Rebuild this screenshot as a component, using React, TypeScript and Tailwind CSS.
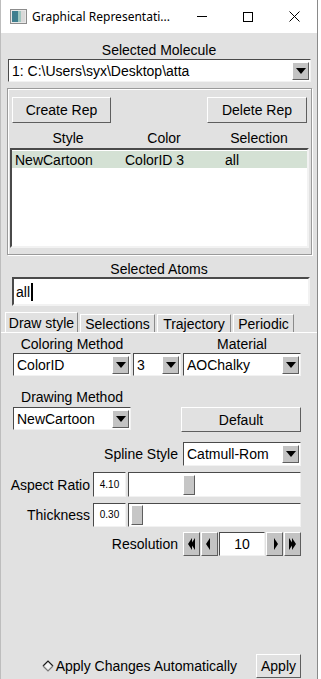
import React from "react";
import { clsx } from "clsx";

const sunken = "border border-t-[#4a4a4a] border-l-[#4a4a4a] border-b-[#f2f2f2] border-r-[#f2f2f2]";
const raised = "border border-t-white border-l-white border-b-[#5e5e5e] border-r-[#5e5e5e]";

const DownArrow = () => (
  <div className={clsx("flex h-[18px] w-[17px] flex-none items-center justify-center bg-[#c3c3c3]", raised)}>
    <svg width="10" height="6" viewBox="0 0 10 6">
      <path d="M0 0h10L5 6z" fill="#000" />
    </svg>
  </div>
);

const Dropdown: React.FC<{ value: string; className?: string }> = ({ value, className }) => (
  <div className={clsx("flex items-center bg-white pl-[3px] pr-[1px]", sunken, className)}>
    <span className="flex-1 truncate">{value}</span>
    <DownArrow />
  </div>
);

const Button: React.FC<{ label: string; className?: string }> = ({ label, className }) => (
  <div className={clsx("flex items-center justify-center bg-[#e1e1e1]", raised, className)}>{label}</div>
);

const Slider: React.FC<{ thumb: number }> = ({ thumb }) => (
  <div className={clsx("flex h-full w-[173px] items-center bg-white", sunken)}>
    <div
      className={clsx("h-[20px] w-[12px] bg-[#c6c6c6]", raised)}
      style={{ marginLeft: thumb }}
    />
  </div>
);

const ArrowBtn: React.FC<{ dir: "l" | "r"; double?: boolean }> = ({ dir, double }) => (
  <div className={clsx("flex h-full w-[17px] items-center justify-center bg-[#c3c3c3]", raised)}>
    <svg width="9" height="14" viewBox="0 0 9 14">
      {dir === "l" ? (
        <>
          <path d="M1 7L5 1v12z" fill="#000" />
          {double && <path d="M4 7L8 1v12z" fill="#000" />}
        </>
      ) : (
        <>
          <path d="M8 7L4 1v12z" fill="#000" />
          {double && <path d="M5 7L1 1v12z" fill="#000" />}
        </>
      )}
    </svg>
  </div>
);

const tabs = [
  { label: "Draw style", w: "w-[73px]", active: true },
  { label: "Selections", w: "w-[75px]" },
  { label: "Trajectory", w: "w-[74px]" },
  { label: "Periodic", w: "w-[61px]" },
];

export default function App() {
  return (
    <div className="flex h-[679px] w-[321px] bg-white text-[14px] leading-[16px] text-black [font-family:'Liberation_Sans',Arial,sans-serif]">
      <div className="flex w-[318px] flex-col border-l border-r border-l-[#bdbdbd] border-r-[#8a8a8a]">
        {/* title bar */}
        <div className="flex h-[33px] flex-none items-center bg-white">
          <svg className="ml-[9px]" width="17" height="15" viewBox="0 0 17 15">
            <rect x="0.5" y="0.5" width="16" height="14" fill="#e8e8e8" stroke="#8c8c8c" />
            <rect x="2" y="2" width="6" height="11" fill="#3f7f8f" />
            <rect x="8" y="2" width="3" height="11" fill="#9fc7c0" />
            <rect x="11" y="2" width="4" height="11" fill="#d9d9d9" />
          </svg>
          <span className="ml-[5px] text-[12px] [font-family:'Noto_Sans',sans-serif]">Graphical Representati...</span>
          <div className="ml-auto flex h-full">
            <div className="flex w-[46px] items-center justify-center">
              <div className="h-px w-[10px] bg-black" />
            </div>
            <div className="flex w-[46px] items-center justify-center">
              <div className="h-[10px] w-[10px] border border-black" />
            </div>
            <div className="flex w-[46px] items-center justify-center">
              <svg width="11" height="11" viewBox="0 0 11 11">
                <path d="M0.5 0.5l10 10M10.5 0.5l-10 10" stroke="#000" strokeWidth="1" />
              </svg>
            </div>
          </div>
        </div>

        {/* body */}
        <div className="flex flex-1 flex-col bg-[#e1e1e1]">
          <div className="mt-[9px] text-center">Selected Molecule</div>
          <Dropdown value="1: C:\Users\syx\Desktop\atta" className="ml-[7px] mr-[6px] mt-[1px] h-[23px]" />

          <div className="ml-[6px] mr-[5px] mt-[6px] flex flex-col border border-[#9a9a9a] pb-[6px] shadow-[inset_1px_1px_0_white,1px_1px_0_white]">
            <div className="mx-[4px] mt-[8px] flex justify-between">
              <Button label="Create Rep" className="h-[26px] w-[99px]" />
              <Button label="Delete Rep" className="h-[26px] w-[100px]" />
            </div>
            <div className="mt-[7px] flex">
              <span className="w-[120px] text-center">Style</span>
              <span className="w-[72px] text-center">Color</span>
              <span className="ml-[9px] w-[100px] text-center">Selection</span>
            </div>
            <div className={clsx("ml-[2px] mr-[2px] mt-[2px] h-[100px] bg-white pt-[1px]", sunken, "border-2 border-t-[#3a3a3a] border-l-[#3a3a3a]")}>
              <div className="flex h-[17px] items-center bg-[#d4e1d4] pl-[3px]">
                <span className="w-[110px]">NewCartoon</span>
                <span className="w-[100px]">ColorID 3</span>
                <span>all</span>
              </div>
            </div>
          </div>

          <div className="mt-[6px] text-center">Selected Atoms</div>
          <div className={clsx("ml-[11px] mr-[7px] flex h-[29px] items-center bg-white pl-[2px]", sunken, "border-2 border-t-[#3a3a3a] border-l-[#3a3a3a]")}>
            <span>all</span>
            <span className="ml-[1px] h-[18px] w-[2px] bg-black" />
          </div>

          {/* tabs */}
          <div className="ml-[4px] mt-[6px] flex h-[20px] items-end gap-[2px]">
            {tabs.map((t) => (
              <div
                key={t.label}
                className={clsx(
                  "flex items-center justify-center border-l border-r border-t border-l-white border-t-white border-r-[#8a8a8a]",
                  t.w,
                  t.active ? "-mb-px h-[21px] bg-[#e1e1e1]" : "h-[18px] bg-[#e1e1e1]"
                )}
              >
                {t.label}
              </div>
            ))}
          </div>

          {/* panel */}
          <div className="flex flex-1 flex-col border-t border-t-white">
            <div className="ml-[12px] mt-[3px] flex gap-[2px]">
              <div className="flex w-[118px] flex-col">
                <div className="text-center">Coloring Method</div>
                <Dropdown value="ColorID" className="mt-[1px] h-[23px]" />
              </div>
              <div className="flex w-[48px] flex-col justify-end">
                <Dropdown value="3" className="h-[23px]" />
              </div>
              <div className="flex w-[118px] flex-col">
                <div className="text-center">Material</div>
                <Dropdown value="AOChalky" className="mt-[1px] h-[23px]" />
              </div>
            </div>

            <div className="ml-[12px] mr-[16px] mt-[13px] flex items-end justify-between">
              <div className="flex w-[118px] flex-col">
                <div className="text-center">Drawing Method</div>
                <Dropdown value="NewCartoon" className="mt-[2px] mb-[2px] h-[23px]" />
              </div>
              <Button label="Default" className="h-[25px] w-[120px]" />
            </div>

            <div className="mr-[16px] mt-[10px] flex h-[24px] items-center justify-end gap-[5px]">
              <span>Spline Style</span>
              <Dropdown value="Catmull-Rom" className="h-[24px] w-[118px]" />
            </div>

            <div className="mt-[6px] flex h-[25px] items-center">
              <span className="w-[89px] text-right">Aspect Ratio</span>
              <div className={clsx("ml-[3px] flex h-full w-[33px] items-center justify-center bg-white text-[10px]", sunken)}>4.10</div>
              <div className="ml-[2px] h-full">
                <Slider thumb={54} />
              </div>
            </div>

            <div className="mt-[6px] flex h-[24px] items-center">
              <span className="w-[89px] text-right">Thickness</span>
              <div className={clsx("ml-[3px] flex h-full w-[33px] items-center justify-center bg-white text-[10px]", sunken)}>0.30</div>
              <div className="ml-[2px] h-full">
                <Slider thumb={2} />
              </div>
            </div>

            <div className="mr-[16px] mt-[5px] flex h-[24px] items-center justify-end">
              <span className="mr-[5px]">Resolution</span>
              <div className="flex h-full gap-[1px]">
                <ArrowBtn dir="l" double />
                <ArrowBtn dir="l" />
                <div className={clsx("flex w-[46px] items-center justify-center bg-white", sunken)}>10</div>
                <ArrowBtn dir="r" />
                <ArrowBtn dir="r" double />
              </div>
            </div>

            <div className="mb-[1px] mr-[16px] mt-auto flex h-[24px] items-center justify-end">
              <svg className="mr-[2px]" width="12" height="12" viewBox="0 0 12 12">
                <path d="M6 1L11 6L6 11L1 6z" fill="#e8e8e8" />
                <path d="M1 6L6 1L11 6" fill="none" stroke="#1a1a1a" strokeWidth="1.2" />
                <path d="M1 6L6 11L11 6" fill="none" stroke="#7a7a7a" strokeWidth="1.2" />
                <path d="M3 6L6 3L9 6L6 9z" fill="#f4f4f4" />
              </svg>
              <span className="mr-[19px]">Apply Changes Automatically</span>
              <Button label="Apply" className="h-[24px] w-[45px] bg-[#cdcdcd]" />
            </div>
          </div>
        </div>
      </div>
    </div>
  );
}
